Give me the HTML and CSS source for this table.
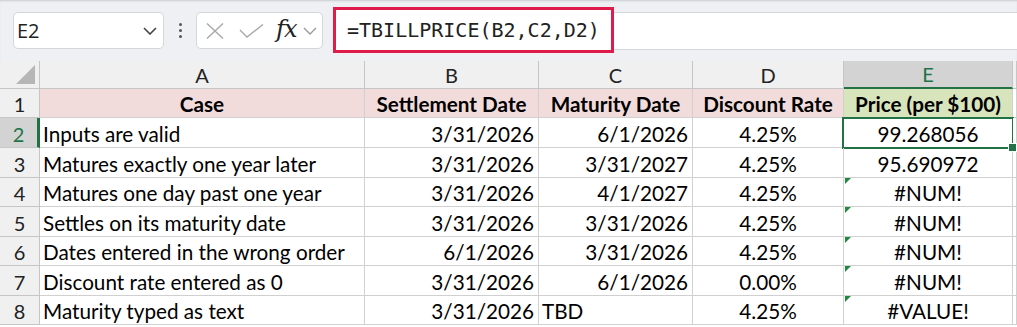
FILE: index.html
```html
<!DOCTYPE html>
<html>
<head>
<meta charset="utf-8">
<link rel="stylesheet" href="styles.css">
</head>
<body>
<div class="toolbar">
  <div class="namebox">
    <span class="name">E2</span>
    <svg class="chev" width="14" height="8" viewBox="0 0 14 8"><path d="M1 1 L7 7 L13 1" fill="none" stroke="#444" stroke-width="1.6"/></svg>
  </div>
  <div class="dots"><i></i><i></i><i></i></div>
  <div class="fxbox">
    <svg class="ic-x" width="18" height="16" viewBox="0 0 18 16"><path d="M1 0.5 L17 15.5 M17 0.5 L1 15.5" stroke="#a8a8a8" stroke-width="1.4" fill="none"/></svg>
    <svg class="ic-check" width="25" height="14" viewBox="0 0 25 14"><path d="M1 6 L8 13 L24 0.5" stroke="#a8a8a8" stroke-width="1.4" fill="none"/></svg>
    <span class="fx">fx</span>
    <svg class="chev2" width="14" height="8" viewBox="0 0 14 8"><path d="M1 1 L7 7 L13 1" fill="none" stroke="#9a9a9a" stroke-width="1.4"/></svg>
  </div>
  <div class="formula">
    <div class="formula-hl">=TBILLPRICE(B2,C2,D2)</div>
  </div>
</div>
<div class="sheet">
  <div class="c hdr corner"></div>
  <div class="c hdr col">A</div>
  <div class="c hdr col">B</div>
  <div class="c hdr col">C</div>
  <div class="c hdr col">D</div>
  <div class="c hdr col sel">E</div>
  <div class="c hdr col"></div>

  <div class="c hdr row">1</div>
  <div class="c th">Case</div>
  <div class="c th">Settlement Date</div>
  <div class="c th">Maturity Date</div>
  <div class="c th">Discount Rate</div>
  <div class="c th th-e">Price (per $100)</div>
  <div class="c rest"></div>

  <div class="c hdr row rsel">2</div>
  <div class="c l">Inputs are valid</div>
  <div class="c r">3/31/2026</div>
  <div class="c r">6/1/2026</div>
  <div class="c m">4.25%</div>
  <div class="c m active">99.268056</div>
  <div class="c rest"></div>

  <div class="c hdr row">3</div>
  <div class="c l">Matures exactly one year later</div>
  <div class="c r">3/31/2026</div>
  <div class="c r">3/31/2027</div>
  <div class="c m">4.25%</div>
  <div class="c m">95.690972</div>
  <div class="c rest"></div>

  <div class="c hdr row">4</div>
  <div class="c l">Matures one day past one year</div>
  <div class="c r">3/31/2026</div>
  <div class="c r">4/1/2027</div>
  <div class="c m">4.25%</div>
  <div class="c m err">#NUM!</div>
  <div class="c rest"></div>

  <div class="c hdr row">5</div>
  <div class="c l">Settles on its maturity date</div>
  <div class="c r">3/31/2026</div>
  <div class="c r">3/31/2026</div>
  <div class="c m">4.25%</div>
  <div class="c m err">#NUM!</div>
  <div class="c rest"></div>

  <div class="c hdr row">6</div>
  <div class="c l">Dates entered in the wrong order</div>
  <div class="c r">6/1/2026</div>
  <div class="c r">3/31/2026</div>
  <div class="c m">4.25%</div>
  <div class="c m err">#NUM!</div>
  <div class="c rest"></div>

  <div class="c hdr row">7</div>
  <div class="c l">Discount rate entered as 0</div>
  <div class="c r">3/31/2026</div>
  <div class="c r">6/1/2026</div>
  <div class="c m">0.00%</div>
  <div class="c m err">#NUM!</div>
  <div class="c rest"></div>

  <div class="c hdr row">8</div>
  <div class="c l">Maturity typed as text</div>
  <div class="c r">3/31/2026</div>
  <div class="c l">TBD</div>
  <div class="c m">4.25%</div>
  <div class="c m err">#VALUE!</div>
  <div class="c rest"></div>
</div>
</body>
</html>
```

FILE: styles.css
```css
* { box-sizing: border-box; }
html, body { margin: 0; padding: 0; }
body {
  width: 1017px;
  height: 327px;
  overflow: hidden;
  background: #ffffff;
  font-family: Lato, "Open Sans", sans-serif;
  color: #000;
}

.toolbar {
  height: 61px;
  background: #eef0f3;
  display: flex;
  align-items: center;
  padding-left: 13px;
  box-shadow: inset 0 2px 2px -1px #c9ccd1;
}

.namebox {
  width: 151px;
  height: 37px;
  background: #fff;
  border: 1px solid #d3d6da;
  border-radius: 5px;
  display: flex;
  align-items: center;
  justify-content: space-between;
  padding: 0 6px 0 3px;
}
.name {
  font-family: "Open Sans", sans-serif;
  font-size: 20px;
  color: #222;
}

.dots {
  width: 32px;
  display: flex;
  flex-direction: column;
  align-items: center;
  gap: 3px;
}
.dots i {
  display: block;
  width: 3px;
  height: 3px;
  border-radius: 50%;
  background: #555;
}

.fxbox {
  width: 127px;
  height: 37px;
  background: #fff;
  border: 1px solid #d3d6da;
  border-radius: 5px;
  display: flex;
  align-items: center;
  padding-left: 9px;
}
.ic-x { margin-right: 15px; }
.ic-check { margin-right: 12px; }
.fx {
  font-family: "DejaVu Serif", serif;
  font-style: italic;
  font-size: 24px;
  color: #222;
  margin-right: 7px;
  margin-top: -4px;
  letter-spacing: -1px;
}

.formula {
  flex: 1;
  height: 38px;
  margin-left: 10px;
  background: #fff;
  border: 1px solid #d3d6da;
  border-right: none;
  border-radius: 5px 0 0 5px;
  display: flex;
  align-items: center;
}
.formula-hl {
  width: 281px;
  height: 46px;
  margin-left: -1px;
  margin-top: -2px;
  border: 3px solid #dd1c4b;
  background: #fff;
  font-family: "DejaVu Sans Mono", monospace;
  font-size: 20px;
  color: #222;
  display: flex;
  align-items: center;
  padding-left: 11px;
  padding-top: 1px;
}

.sheet {
  display: grid;
  grid-template-columns: 40px 325px 174px 154px 151px 169px 1fr;
  grid-template-rows: 28px 29px 30px 30px 29px 30px 29px 30px 29px;
  font-size: 20.7px;
}

.c {
  position: relative;
  border-right: 1px solid #d0d0d0;
  border-bottom: 1px solid #d0d0d0;
  display: flex;
  align-items: center;
  white-space: nowrap;
  padding-top: 2px;
}
.l { padding-left: 3px; }
.r { justify-content: flex-end; padding-right: 4px; }
.m { justify-content: center; }

.hdr {
  background: #f0f0f0;
  border-color: #c6c6c6;
  color: #222;
  justify-content: center;
  font-size: 20px;
}
.col { padding-top: 0; }
.corner::after {
  content: "";
  position: absolute;
  right: 4px;
  bottom: 4px;
  width: 19px;
  height: 19px;
  background: #b6b6b6;
  clip-path: polygon(100% 0, 100% 100%, 0 100%);
}
.hdr.sel {
  background: #d3d3d3;
  color: #217346;
  border-bottom: 2px solid #217346;
}
.hdr.rsel {
  background: #d3d3d3;
  color: #217346;
  border-right: 3px solid #217346;
}

.th {
  background: #f2dcdb;
  font-weight: bold;
  justify-content: center;
}
.th-e { background: #d8e4bc; }

.rest { background: #fff; }

.active::after {
  content: "";
  position: absolute;
  left: -2px;
  top: -1px;
  right: -2px;
  bottom: -2px;
  border: 2px solid #217346;
}
.active::before {
  content: "";
  position: absolute;
  right: -5px;
  bottom: -5px;
  width: 7px;
  height: 7px;
  background: #217346;
  border: 1px solid #fff;
  z-index: 2;
}

.err::before {
  content: "";
  position: absolute;
  left: 1px;
  top: 0;
  width: 6px;
  height: 6px;
  background: #1f8a3c;
  clip-path: polygon(0 0, 100% 0, 0 100%);
}
```
